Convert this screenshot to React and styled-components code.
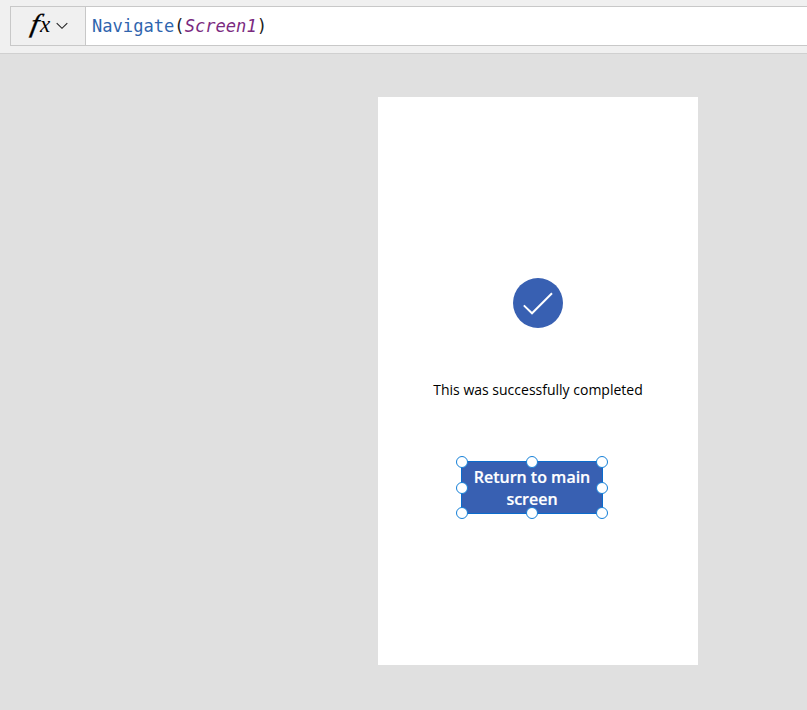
import React from "react";
import styled, { createGlobalStyle } from "styled-components";

const GlobalStyle = createGlobalStyle`
  * { box-sizing: border-box; }
  body { margin: 0; background: #e0e0e0; overflow: hidden; }
`;

const Studio = styled.div`
  display: flex;
  flex-direction: column;
  height: 710px;
  background: #e0e0e0;
  font-family: "Open Sans", sans-serif;
`;

const FormulaBar = styled.header`
  display: flex;
  flex: none;
  height: 54px;
  padding: 6px 0 7px 10px;
  background: #f0f0f0;
  border-bottom: 1px solid #d0d0d0;
`;

const FunctionPicker = styled.button`
  display: flex;
  align-items: center;
  width: 76px;
  height: 40px;
  padding: 0;
  border: 1px solid #c8c8c8;
  background: #f0f0f0;
`;

const FxLabel = styled.span`
  display: flex;
  align-items: baseline;
  width: 26px;
  margin: -3px 0 0 19px;
  font: italic 26px/30px "Liberation Serif", serif;
  color: #000;
`;

const FxHead = styled.span`
  display: inline-block;
  width: 10px;
  transform: skewX(-10deg) scaleX(1.15);
  -webkit-text-stroke: 0.3px #000;
`;

const FxTail = styled.span`
  font-size: 23px;
`;

const Formula = styled.code`
  flex: 1;
  height: 40px;
  padding-left: 6px;
  border: solid #c8c8c8;
  border-width: 1px 0;
  background: #fff;
  color: #222;
  font: 17.1px/38px "DejaVu Sans Mono", monospace;
  white-space: nowrap;
`;

const FunctionName = styled.span`
  color: #2f65ae;
`;

const ScreenName = styled.span`
  color: #7b2a80;
  font-style: italic;
`;

const Canvas = styled.main`
  flex: 1;
  padding: 43px 0 0 378px;
`;

const AppScreen = styled.section`
  display: flex;
  flex-direction: column;
  align-items: center;
  width: 320px;
  height: 568px;
  padding-top: 181px;
  background: #fff;
`;

const Message = styled.p`
  margin: 51px 0 0;
  color: #000;
  font-size: 14px;
  line-height: 22px;
  white-space: nowrap;
`;

const Selection = styled.div`
  position: relative;
  width: 142px;
  height: 53px;
  margin: 60px 12px 0 0;
`;

const ReturnButton = styled.button`
  width: 100%;
  height: 100%;
  padding: 1px 5px 0;
  border: 1px solid #0b6ccd;
  background: #3860b2;
  color: #fff;
  font: 600 16px/22px "Open Sans", sans-serif;
  -webkit-text-stroke: 0.2px #fff;
`;

const Handle = styled.i`
  position: absolute;
  left: ${(p) => p.$x};
  top: ${(p) => p.$y};
  width: 12px;
  height: 12px;
  border: 1px solid #1580d8;
  border-radius: 50%;
  background: #fff;
  transform: translate(-50%, -50%);
`;

const columns = ["1px", "71px", "141px"];
const rows = ["1px", "27px", "52px"];

const handles = rows.flatMap((y, r) =>
  columns.filter((_, c) => r !== 1 || c !== 1).map((x) => ({ x, y }))
);

export default function App() {
  return (
    <Studio>
      <GlobalStyle />
      <FormulaBar>
        <FunctionPicker>
          <FxLabel><FxHead>f</FxHead><FxTail>x</FxTail></FxLabel>
          <svg width="12" height="8" viewBox="0 0 12 8" fill="none" stroke="#222" strokeWidth="1.1">
            <path d="M.7 1.2 6 6.3l5.3-5.1" />
          </svg>
        </FunctionPicker>
        <Formula>
          <FunctionName>Navigate</FunctionName>(<ScreenName>Screen1</ScreenName>)
        </Formula>
      </FormulaBar>
      <Canvas>
        <AppScreen>
          <svg width="50" height="50" viewBox="0 0 50 50" fill="none">
            <circle cx="25" cy="25" r="25" fill="#3860b2" />
            <path d="M10.8 27.4 19 35.3 39 15.3" stroke="#fff" strokeWidth="2" />
          </svg>
          <Message>This was successfully completed</Message>
          <Selection>
            <ReturnButton>Return to main screen</ReturnButton>
            {handles.map((h) => (
              <Handle key={h.x + h.y} $x={h.x} $y={h.y} />
            ))}
          </Selection>
        </AppScreen>
      </Canvas>
    </Studio>
  );
}
